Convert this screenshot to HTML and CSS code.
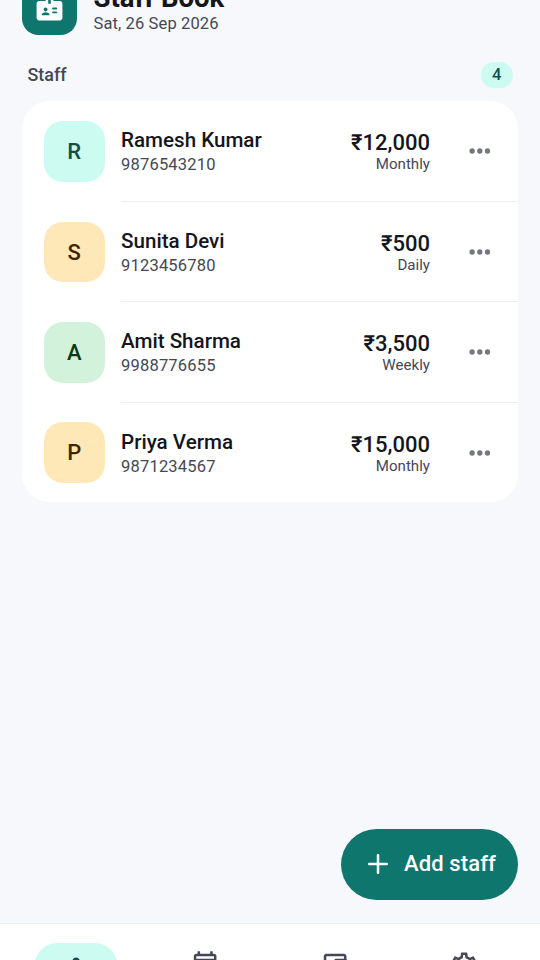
FILE: index.html
```html
<!DOCTYPE html>
<html lang="en">
<head>
<meta charset="utf-8">
<title>Staff Book</title>
<link rel="stylesheet" href="styles.css">
</head>
<body>
<div class="app">
  <header class="header">
    <div class="logo">
      <svg viewBox="0 0 24 24"><path fill-rule="evenodd" d="M20 7h-5V4c0-1.1-.9-2-2-2h-2c-1.1 0-2 .9-2 2v3H4c-1.1 0-2 .9-2 2v11c0 1.1.9 2 2 2h16c1.1 0 2-.9 2-2V9c0-1.1-.9-2-2-2zM9 12c.83 0 1.5.67 1.5 1.5S9.83 15 9 15s-1.5-.67-1.5-1.5S8.17 12 9 12zm3 6H6v-.43c0-.6.36-1.15.92-1.39.65-.28 1.34-.43 2.08-.43s1.43.15 2.08.43c.55.24.92.78.92 1.39V18zm1-9h-2V4h2v5zm4.250 7.500h-2.500a.75.75 0 0 1 0-1.500h2.500a.75.75 0 0 1 0 1.500zm0-3h-2.500a.75.75 0 0 1 0-1.500h2.500a.75.75 0 0 1 0 1.500z"/></svg>
    </div>
    <div class="heading">
      <h1 class="title">Staff Book</h1>
      <p class="date">Sat, 26 Sep 2026</p>
    </div>
  </header>

  <div class="section">
    <h2 class="section-title">Staff</h2>
    <span class="count">4</span>
  </div>

  <ul class="card">
    <li class="row">
      <div class="avatar teal">R</div>
      <div class="body">
        <div class="person"><div class="name">Ramesh Kumar</div><div class="phone">9876543210</div></div>
        <div class="pay"><div class="amount">₹12,000</div><div class="period">Monthly</div></div>
        <svg class="more" viewBox="0 0 22 8"><circle cx="3.100" cy="4" r="2.650"/><circle cx="10.800" cy="4" r="2.650"/><circle cx="18.500" cy="4" r="2.650"/></svg>
      </div>
    </li>
    <li class="row">
      <div class="avatar amber">S</div>
      <div class="body">
        <div class="person"><div class="name">Sunita Devi</div><div class="phone">9123456780</div></div>
        <div class="pay"><div class="amount">₹500</div><div class="period">Daily</div></div>
        <svg class="more" viewBox="0 0 22 8"><circle cx="3.100" cy="4" r="2.650"/><circle cx="10.800" cy="4" r="2.650"/><circle cx="18.500" cy="4" r="2.650"/></svg>
      </div>
    </li>
    <li class="row">
      <div class="avatar green">A</div>
      <div class="body">
        <div class="person"><div class="name">Amit Sharma</div><div class="phone">9988776655</div></div>
        <div class="pay"><div class="amount">₹3,500</div><div class="period">Weekly</div></div>
        <svg class="more" viewBox="0 0 22 8"><circle cx="3.100" cy="4" r="2.650"/><circle cx="10.800" cy="4" r="2.650"/><circle cx="18.500" cy="4" r="2.650"/></svg>
      </div>
    </li>
    <li class="row">
      <div class="avatar amber">P</div>
      <div class="body">
        <div class="person"><div class="name">Priya Verma</div><div class="phone">9871234567</div></div>
        <div class="pay"><div class="amount">₹15,000</div><div class="period">Monthly</div></div>
        <svg class="more" viewBox="0 0 22 8"><circle cx="3.100" cy="4" r="2.650"/><circle cx="10.800" cy="4" r="2.650"/><circle cx="18.500" cy="4" r="2.650"/></svg>
      </div>
    </li>
  </ul>

  <button class="fab">
    <svg viewBox="0 0 24 24"><path d="M5 12h14M12 5v14"/></svg>
    <span>Add staff</span>
  </button>

  <nav class="nav">
    <div class="tab active"><span class="pill"><svg viewBox="0 0 24 24"><path d="M12 12.750c1.630 0 3.070.39 4.240.9 1.080.48 1.760 1.560 1.760 2.730V18H6v-1.610c0-1.180.68-2.260 1.760-2.730 1.170-.52 2.610-.91 4.240-.91zM4 13c1.100 0 2-.9 2-2s-.9-2-2-2-2 .9-2 2 .9 2 2 2zm16 0c1.100 0 2-.9 2-2s-.9-2-2-2-2 .9-2 2 .9 2 2 2zM12 6c1.660 0 3 1.340 3 3s-1.340 3-3 3-3-1.340-3-3 1.340-3 3-3z"/></svg></span></div>
    <div class="tab"><span class="pill"><svg viewBox="0 0 24 24"><path d="M19 3h-1V1h-2v2H8V1H6v2H5c-1.110 0-2 .9-2 2v14c0 1.100.89 2 2 2h14c1.100 0 2-.9 2-2V5c0-1.100-.9-2-2-2zm0 16H5V9h14v10zm0-12H5V5h14v2z"/></svg></span></div>
    <div class="tab"><span class="pill"><svg viewBox="0 0 24 24"><path fill-rule="evenodd" d="M21 7.280V5c0-1.100-.9-2-2-2H5c-1.110 0-2 .9-2 2v14c0 1.100.89 2 2 2h14c1.100 0 2-.9 2-2v-2.280c.59-.35 1-.98 1-1.720V9c0-.74-.41-1.370-1-1.720zM20 9v6h-7V9h7zM5 19V5h14v2h-6c-1.100 0-2 .9-2 2v6c0 1.100.9 2 2 2h6v2H5z"/></svg></span></div>
    <div class="tab"><span class="pill"><svg viewBox="0 0 24 24"><path d="M19.430 12.980c.04-.32.07-.64.07-.98s-.03-.66-.07-.98l2.110-1.650c.19-.15.24-.42.12-.64l-2-3.460c-.12-.22-.39-.3-.61-.22l-2.490 1c-.52-.4-1.080-.73-1.690-.98l-.38-2.650C14.460 2.180 14.250 2 14 2h-4c-.25 0-.46.18-.49.42l-.38 2.650c-.61.25-1.170.59-1.690.98l-2.490-1c-.23-.09-.49 0-.61.22l-2 3.460c-.13.22-.07.49.12.64l2.110 1.650c-.04.32-.07.65-.07.98s.03.66.07.98l-2.110 1.650c-.19.15-.24.42-.12.64l2 3.460c.12.22.39.3.61.22l2.490-1c.52.4 1.080.73 1.690.98l.38 2.650c.03.24.24.42.49.42h4c.25 0 .46-.18.49-.42l.38-2.650c.61-.25 1.170-.59 1.690-.98l2.490 1c.23.09.49 0 .61-.22l2-3.460c.12-.22.07-.49-.12-.64l-2.110-1.650zm-1.980-1.710c.04.31.05.52.05.73s-.02.43-.05.73l-.14 1.130.89.7 1.080.84-.7 1.210-1.270-.51-1.040-.42-.9.68c-.43.32-.84.56-1.250.73l-1.060.43-.16 1.130-.2 1.350h-1.400l-.35-2.480-1.060-.43c-.43-.18-.83-.41-1.230-.71l-.91-.7-1.060.43-1.270.51-.7-1.210 1.080-.84.89-.7-.14-1.130c-.03-.31-.05-.54-.05-.74s.02-.43.05-.73l.14-1.130-.89-.7-1.080-.84.7-1.210 1.270.51 1.040.42.9-.68c.43-.32.84-.56 1.250-.73l1.060-.43.16-1.130.2-1.350h1.390l.35 2.480 1.060.43c.43.18.83.41 1.230.71l.91.7 1.060-.43 1.270-.51.7 1.210-1.070.85-.89.7.14 1.130zM12 8a4 4 0 1 0 0 8 4 4 0 0 0 0-8zm0 6a2 2 0 1 1 0-4 2 2 0 0 1 0 4z"/></svg></span></div>
  </nav>
</div>
</body>
</html>
```
FILE: styles.css
```css
* { box-sizing: border-box; }

html { height: 100%; overflow: hidden; }

body {
  margin: 0;
  height: 100%;
  overflow: hidden;
  background: #f6f8fc;
  color: #14161c;
  font-family: Roboto, "Noto Sans", sans-serif;
}

h1, h2, p, ul { margin: 0; padding: 0; }

.app {
  display: flex;
  flex-direction: column;
  height: 980.500px;
  margin-top: -20.500px;
}

.header {
  display: flex;
  align-items: center;
  gap: 16.500px;
  height: 55px;
  padding: 0 22px;
}

.logo {
  display: grid;
  place-items: center;
  width: 55px;
  height: 55px;
  border-radius: 16.500px;
  background: #0f766e;
}

.logo svg { width: 31px; height: 31px; fill: #fff; }

.title {
  font-size: 27.500px;
  font-weight: 700;
  line-height: 33px;
}

.date {
  color: #454854;
  font-size: 16.500px;
  letter-spacing: 0.120px;
  line-height: 19px;
}

.section {
  display: flex;
  align-items: center;
  justify-content: space-between;
  height: 26px;
  margin: 27.500px 27.500px 13px;
}

.section-title {
  padding-bottom: 1px;
  color: #454854;
  font-size: 17.900px;
  font-weight: 500;
}

.count {
  width: 31.500px;
  border-radius: 13px;
  background: #ccfbf1;
  color: #134e4a;
  font-size: 16.500px;
  font-weight: 500;
  line-height: 26px;
  text-align: center;
}

.card {
  margin: 0 22px;
  overflow: hidden;
  border-radius: 27.500px;
  background: #fff;
  list-style: none;
}

.row {
  display: flex;
  align-items: center;
  gap: 16.500px;
  height: 100.500px;
  padding-left: 22px;
}

.avatar {
  flex: none;
  width: 60.500px;
  height: 60.500px;
  border-radius: 19px;
  font-size: 22px;
  font-weight: 500;
  line-height: 61px;
  text-align: center;
}

.teal { background: #ccfbf1; color: #134e4a; }
.amber { background: #ffe8b8; color: #3f2600; }
.green { background: #d3f2dc; color: #053b15; }

.body {
  display: flex;
  flex: 1;
  align-items: center;
  height: 100%;
  padding-right: 27px;
  border-bottom: 1.400px solid #eceef4;
}

.row:last-child { height: 99.500px; }
.row:last-child .body { border-bottom: 0; }

.person { flex: 1; padding-top: 2px; }

.name {
  font-size: 20.600px;
  font-weight: 500;
  line-height: 27px;
}

.phone {
  color: #454854;
  font-size: 16.500px;
  letter-spacing: 0.200px;
  line-height: 22px;
}

.pay { padding-top: 2.500px; text-align: right; }

.amount {
  font-size: 22px;
  font-weight: 500;
  line-height: 25px;
}

.period {
  color: #454854;
  font-size: 15.100px;
  line-height: 19px;
}

.more {
  width: 22px;
  height: 8px;
  margin: 1px 0 0 39px;
  fill: #757780;
}

.fab {
  display: flex;
  align-items: center;
  align-self: flex-end;
  gap: 11.500px;
  width: 177.500px;
  height: 71.500px;
  margin: auto 22px 22.500px 0;
  padding: 0 0 0 22px;
  border: 0;
  border-radius: 36px;
  background: #0f766e;
  color: #fff;
  font: 500 22px/28px Roboto, sans-serif;
  letter-spacing: 0.120px;
}

.fab svg {
  width: 30px;
  height: 30px;
  fill: none;
  stroke: #fff;
  stroke-width: 2;
  stroke-linecap: round;
}

.nav {
  display: flex;
  flex: none;
  height: 37.500px;
  padding: 19.500px 11px 0;
  overflow: hidden;
  border-top: 1.400px solid #edf1f7;
  background: #fff;
}

.tab { display: flex; flex: 1; justify-content: center; }

.pill {
  display: grid;
  place-items: center;
  width: 82.500px;
  height: 44px;
  border-radius: 22px;
}

.active .pill { background: #ccfbf1; }

.pill svg { width: 30.250px; height: 30.250px; fill: #454854; }
.active .pill svg { fill: #134e4a; }
```
